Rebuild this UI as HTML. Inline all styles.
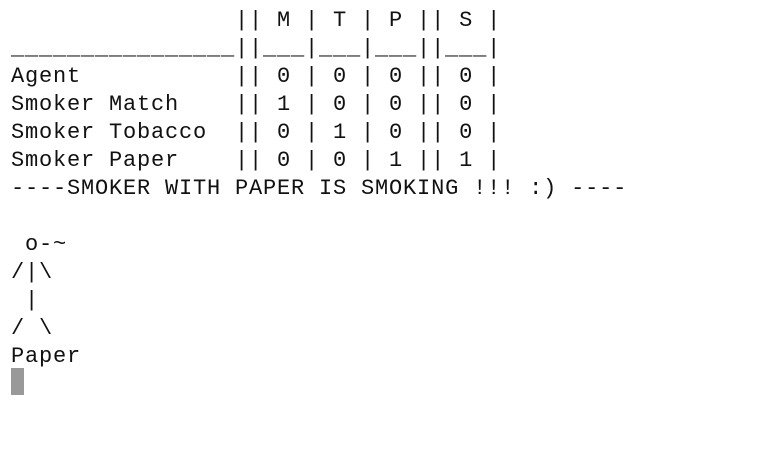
<!DOCTYPE html>
<html><head><meta charset="utf-8"><style>
html,body{margin:0;padding:0;background:#fff;width:764px;height:454px;overflow:hidden}
pre{margin:0;position:absolute;left:11px;top:7px;font-family:"Liberation Mono",monospace;font-size:22px;letter-spacing:0.8px;line-height:28px;color:#111}
.cur{position:absolute;left:11px;top:368px;width:13px;height:27px;background:#999}
</style></head><body>
<pre>                || M | T | P || S |
________________||___|___|___||___|
Agent           || 0 | 0 | 0 || 0 |
Smoker Match    || 1 | 0 | 0 || 0 |
Smoker Tobacco  || 0 | 1 | 0 || 0 |
Smoker Paper    || 0 | 0 | 1 || 1 |
----SMOKER WITH PAPER IS SMOKING !!! :) ----

 o-~
/|\
 |
/ \
Paper</pre>
<div class="cur"></div>
</body></html>
